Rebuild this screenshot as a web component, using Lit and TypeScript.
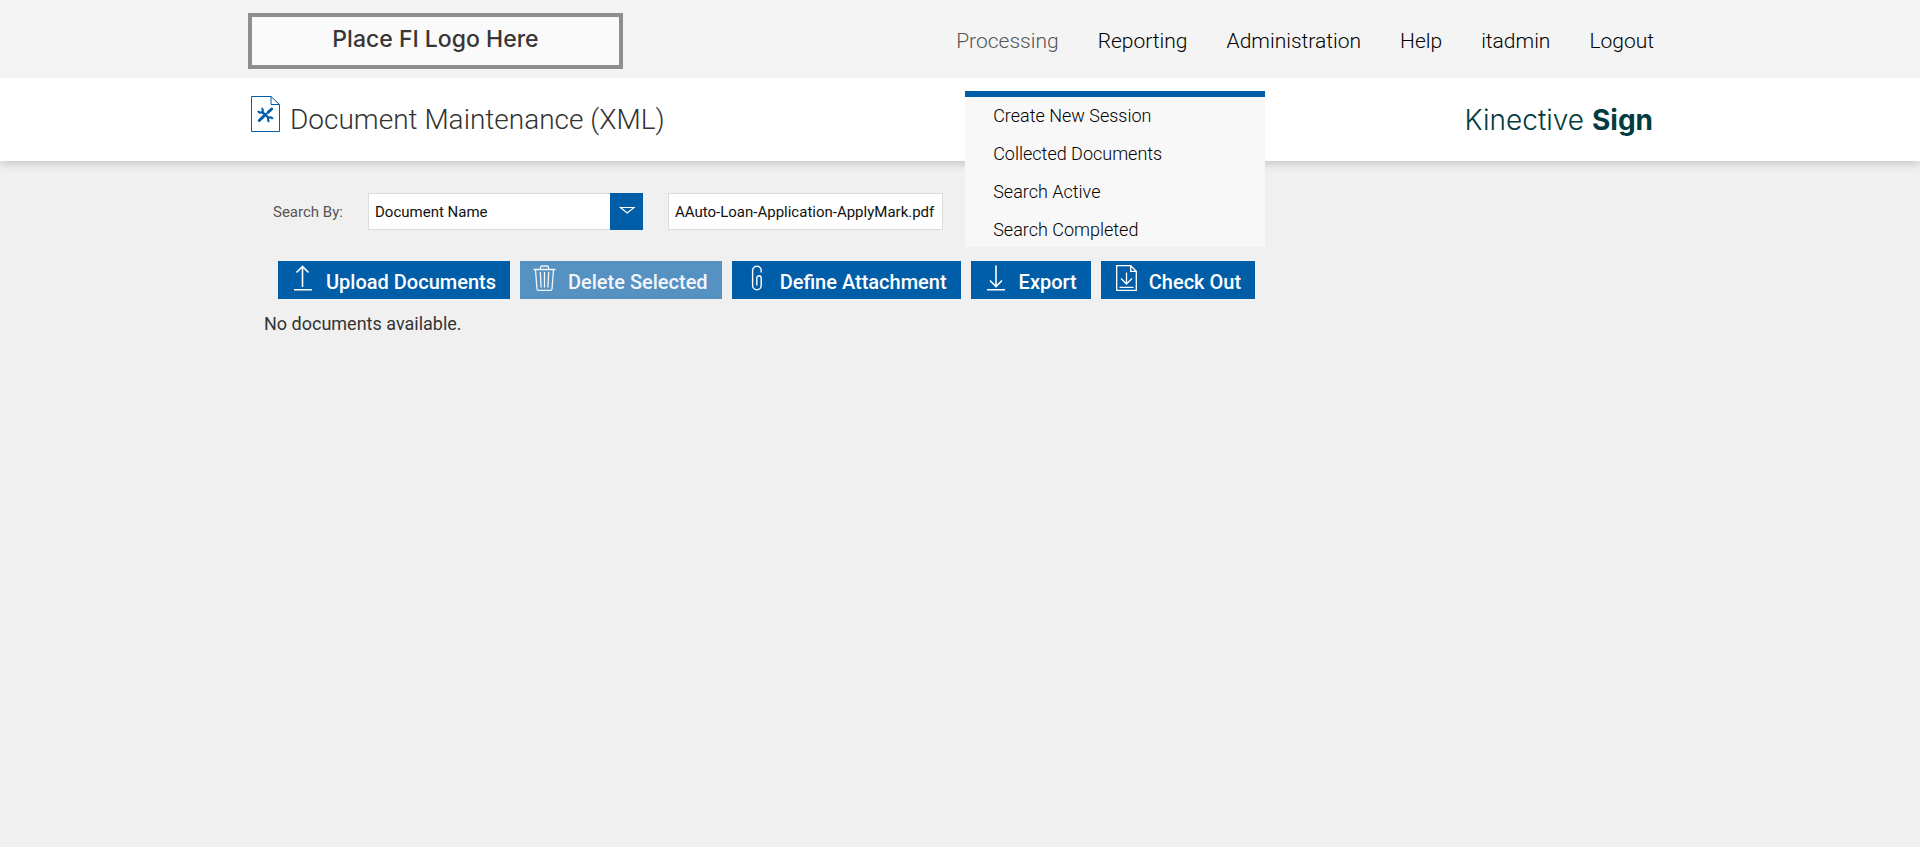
import { LitElement, html, css, svg } from "lit";
import { customElement, state } from "lit/decorators.js";

type Action = { label: string; icon: unknown; disabled?: boolean };

const navItems = ["Reporting", "Administration", "Help", "itadmin", "Logout"];
const menuItems = [
  "Create New Session",
  "Collected Documents",
  "Search Active",
  "Search Completed",
];

const actions: Action[] = [
  {
    label: "Upload Documents",
    icon: svg`<path d="M12.5 1.5V22M6.5 7.5l6-6 6 6M4 24.8h18" />`,
  },
  {
    label: "Delete Selected",
    disabled: true,
    icon: svg`<path stroke-width="1.3" d="M1.500 4.500H23.500M8.500 4V2.500q0-1.500 1.500-1.500h5q1.500 0 1.500 1.500V4M3.500 5l1.500 19q.1 1.300 1.400 1.300h12.200q1.300 0 1.400-1.300l1.500-19M8.300 7l.8 15.500M12.500 7v15.500M16.700 7l-.8 15.500" />`,
  },
  {
    label: "Define Attachment",
    icon: svg`<path stroke-width="1.4" d="M17.200 7.500V5.500a4.300 4.300 0 0 0-8.600 0V20.500a4.300 4.300 0 0 0 8.600 0V13a2.200 2.200 0 0 0-4.400 0v7.500" />`,
  },
  {
    label: "Export",
    icon: svg`<path d="M13 .5V21M7 15.500l6 6 6-6M4 24.800h18" />`,
  },
  {
    label: "Check Out",
    icon: svg`<path stroke-width="1.300" d="M3.700.7h14l5.600 5.600v19H3.700zM17.700.7v5.600h5.600M13.500 7.500v11M8 13.500l5.500 5.500 5.500-5.500M6.500 22.300h14" />`,
  },
];

@customElement("app-root")
export class AppRoot extends LitElement {
  @state() private criterion = "Document Name";

  static styles = css`
    :host {
      display: block;
      min-height: 100vh;
      background: #f0f0f0;
      color: #333;
      font-family: Roboto, "Liberation Sans", sans-serif;
    }
    .band,
    .main {
      padding-right: 16px;
    }
    .wrap {
      max-width: 1408px;
      margin: 0 auto;
      display: flex;
      box-sizing: border-box;
    }
    .top {
      background: #f4f4f4;
      position: relative;
      z-index: 1;
    }
    .top .wrap {
      justify-content: space-between;
      align-items: center;
      padding: 13px 2px 9px 0;
    }
    .logo {
      box-sizing: border-box;
      width: 375px;
      height: 56px;
      border: 4px solid #8e8e8e;
      background: #fafafa;
      color: #383536;
      font: 500 23px/44px Inter, sans-serif;
      text-align: center;
    }
    nav ul {
      list-style: none;
      margin: 0;
      padding: 0;
    }
    .nav {
      display: flex;
      gap: 39px;
      font-size: 21px;
      font-weight: 300;
      line-height: 56px;
    }
    .nav a {
      color: #000;
      text-decoration: none;
    }
    .nav .current {
      color: #555;
    }
    .has-menu {
      position: relative;
    }
    .nav .menu {
      position: absolute;
      z-index: 2;
      top: 78px;
      left: 9px;
      width: 300px;
      box-sizing: border-box;
      border-top: 6px solid #005da8;
      background: #f8f8f8;
      padding: 2px 28px 0;
      display: grid;
      gap: 4px;
      font-size: 18px;
      line-height: 34px;
    }
    .title {
      background: #fff;
      box-shadow: 0 2px 10px rgba(0, 0, 0, 0.2);
      position: relative;
    }
    .title .wrap {
      padding: 18px 3px 17px 2px;
      gap: 10px;
    }
    .title-icon {
      width: 30px;
      height: 36px;
      flex: none;
    }
    h1 {
      margin: 0;
      flex: 1;
      font-size: 28px;
      font-weight: 300;
      line-height: 48px;
      color: #333;
    }
    .brand {
      color: #023c40;
      font: 300 28px/48px Inter, sans-serif;
    }
    .brand strong {
      font-weight: 700;
    }
    .search {
      align-items: center;
      padding: 32px 25px 0;
      gap: 25px;
      font-size: 15px;
    }
    .search label {
      width: 70px;
      color: #555;
    }
    .field {
      display: block;
      box-sizing: border-box;
      width: 275px;
      height: 37px;
      margin: 0;
      border: 1px solid #ddd;
      border-radius: 0;
      background: #fff;
      color: #111;
      padding: 0 6px;
      font: 400 15px Roboto, sans-serif;
      appearance: none;
      outline: 0;
    }
    .select {
      position: relative;
    }
    .arrow {
      position: absolute;
      top: 0;
      right: 0;
      width: 33px;
      height: 37px;
      background: #005da8;
      pointer-events: none;
    }
    .actions {
      gap: 10px;
      padding: 31px 30px 0;
    }
    .action {
      display: flex;
      align-items: flex-start;
      gap: 10px;
      height: 38px;
      padding: 4px 14px 0 12px;
      border: 0;
      background: #005da8;
      color: #fff;
      font: 500 20px/34px Roboto, sans-serif;
      white-space: nowrap;
    }
    .action:disabled {
      background: #5591c1;
      color: #f2f6fa;
    }
    .action svg {
      width: 26px;
      height: 26px;
      fill: none;
      stroke: currentColor;
      stroke-width: 1.6;
      flex: none;
    }
    .empty {
      padding: 12px 16px 0;
      font-size: 18px;
      line-height: 26px;
    }
  `;

  render() {
    return html`
      <header class="band top">
        <div class="wrap">
          <div class="logo">Place FI Logo Here</div>
          <nav>
            <ul class="nav">
              <li class="has-menu">
                <a class="current" href="#">Processing</a>
                <ul class="menu">
                  ${menuItems.map((m) => html`<li><a href="#">${m}</a></li>`)}
                </ul>
              </li>
              ${navItems.map((n) => html`<li><a href="#">${n}</a></li>`)}
            </ul>
          </nav>
        </div>
      </header>
      <section class="band title">
        <div class="wrap">
          <svg class="title-icon" viewBox="0 0 30 36" fill="none" stroke="#005da8" aria-hidden="true">
            <path d="M1.500.5H21L29.500 8.500V35.500H1.500zM21 .5V8.500H29.500" />
            <path d="M12 16l7 6.200" stroke-width="2.400" />
            <path
              d="M8 15q1.500 2.500 4 1.200 1.800-1.700-.2-4.200M22.800 23q-1.500-2.500-4-1.200-1.800 1.700.2 4.200"
              stroke-width="2"
            />
            <path d="M13.500 20.500l5-4.500" stroke-width="1.800" />
            <path d="M9.300 24.500l4-3.800M18.500 16l3.200-3" stroke-width="3" stroke-linecap="round" />
          </svg>
          <h1>Document Maintenance (XML)</h1>
          <div class="brand">Kinective <strong>Sign</strong></div>
        </div>
      </section>
      <main class="main">
        <div class="wrap search">
          <label for="criterion">Search By:</label>
          <div class="select">
            <select
              id="criterion"
              class="field"
              .value=${this.criterion}
              @change=${(e: Event) => (this.criterion = (e.target as HTMLSelectElement).value)}
            >
              <option>Document Name</option>
            </select>
            <svg class="arrow" viewBox="0 0 33 37" fill="none" stroke="#fff" stroke-width="1.200" aria-hidden="true">
              <path d="M10.500 14.500h13.500l-6.750 5.500z" />
            </svg>
          </div>
          <input class="field" type="text" aria-label="Search text" value="AAuto-Loan-Application-ApplyMark.pdf" />
        </div>
        <div class="wrap actions">
          ${actions.map(
            (a) => html`<button class="action" type="button" ?disabled=${a.disabled}>
              <svg viewBox="0 0 26 26" aria-hidden="true">${a.icon}</svg><span>${a.label}</span>
            </button>`
          )}
        </div>
        <div class="wrap empty">No documents available.</div>
      </main>
    `;
  }
}
